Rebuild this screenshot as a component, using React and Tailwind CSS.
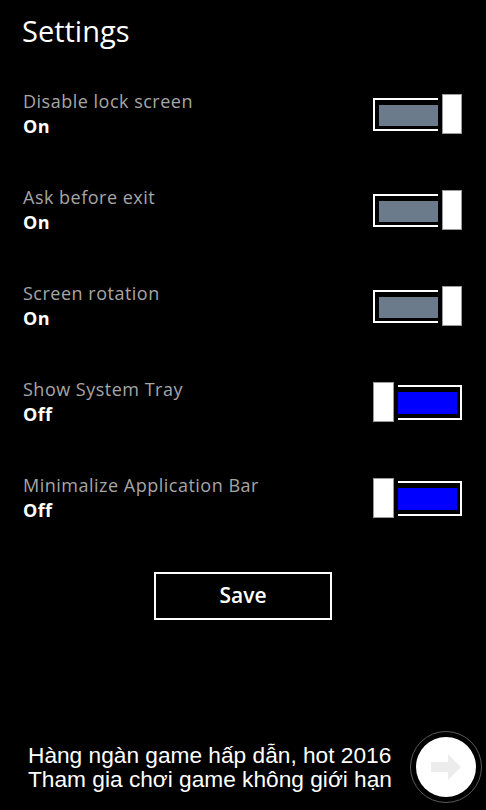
import React from "react";

const segoe = { fontFamily: '"Open Sans", "Noto Sans", sans-serif' };

function Toggle({ on }) {
  if (on) {
    return (
      <div className="flex items-center gap-[4px]">
        <div className="border-[2px] border-r-0 border-white pl-[4px] pt-[5px] pb-[3px]">
          <div className="w-[59px] h-[21px] bg-[#6c7b8c]" />
        </div>
        <div className="w-[20px] h-[40px] bg-white border border-[#9a9a9a]" />
      </div>
    );
  }
  return (
    <div className="flex items-center gap-[4px]">
      <div className="w-[21px] h-[40px] bg-white border border-[#9a9a9a]" />
      <div className="border-[2px] border-l-0 border-white pr-[3px] pt-[5px] pb-[4px]">
        <div className="w-[59px] h-[22px] bg-[#0000ff]" />
      </div>
    </div>
  );
}

const rows = [
  { label: "Disable lock screen", on: true },
  { label: "Ask before exit", on: true },
  { label: "Screen rotation", on: true },
  { label: "Show System Tray", on: false },
  { label: "Minimalize Application Bar", on: false },
];

export default function App() {
  return (
    <div className="h-[810px] w-[486px] bg-black flex flex-col overflow-hidden" style={segoe}>
      <div className="h-[66px] pl-[22px] pt-[11px]">
        <div className="text-white text-[29px] leading-[40px]">Settings</div>
      </div>
      {rows.map((r) => (
        <div key={r.label} className="h-[96px] flex items-center justify-between pl-[23px] pr-[24px]">
          <div className="flex flex-col">
            <div className="text-[#a6a6a6] text-[18px] leading-[25px] tracking-[0.5px]">{r.label}</div>
            <div className="text-white text-[18px] leading-[25px] font-bold tracking-[0.4px]">{r.on ? "On" : "Off"}</div>
          </div>
          <Toggle on={r.on} />
        </div>
      ))}
      <div className="flex justify-center mt-[26px]">
        <div className="w-[178px] h-[48px] border-[2px] border-white flex items-center justify-center text-white text-[21px] font-semibold">
          Save
        </div>
      </div>
      <div className="mt-auto flex items-center justify-between pl-[28px] pr-[4px] pb-[7px]">
        <div
          className="text-white text-[22.7px] leading-[24px]"
          style={{ fontFamily: '"Liberation Sans", Arial, sans-serif' }}
        >
          <div>Hàng ngàn game hấp dẫn, hot 2016</div>
          <div>Tham gia chơi game không giới hạn</div>
        </div>
        <div className="w-[72px] h-[72px] rounded-full border border-[#5a5a5a] flex items-center justify-center">
          <div className="w-[60px] h-[60px] rounded-full bg-white flex items-center justify-center">
            <svg width="30" height="26" viewBox="0 0 30 26">
              <path d="M0 8 H17 V0 L30 13 L17 26 V18 H0 Z" fill="#ececec" />
            </svg>
          </div>
        </div>
      </div>
    </div>
  );
}
